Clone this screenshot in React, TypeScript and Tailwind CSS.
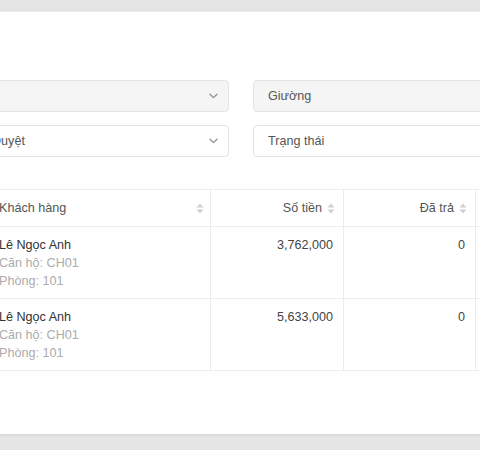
function Chevron() {
  return (
    <svg width="9" height="6" viewBox="0 0 9 6" fill="none" className="shrink-0">
      <path d="M1 1.2 L4.5 4.6 L8 1.2" stroke="#8a8a8a" strokeWidth="1.2" strokeLinecap="round" strokeLinejoin="round" />
    </svg>
  );
}

function SortIcon() {
  return (
    <svg width="8" height="11" viewBox="0 0 8 11" className="shrink-0">
      <path d="M4 0.5 L7.5 4.5 H0.5 Z" fill="#cfcfd4" />
      <path d="M4 10.5 L7.5 6.5 H0.5 Z" fill="#cfcfd4" />
    </svg>
  );
}

function Select({ label, disabled, arrow }: { label: string; disabled?: boolean; arrow?: boolean }) {
  return (
    <div
      className={`flex h-[32px] items-center justify-between rounded-[4px] border border-[#e2e2e8] pl-[14px] pr-[10px] text-[#555] ${
        disabled ? "bg-[#f5f5f5]" : "bg-white"
      }`}
    >
      <span>{label}</span>
      {arrow && <Chevron />}
    </div>
  );
}

const rows = [
  { name: "Lê Ngọc Anh", apt: "Căn hộ: CH01", room: "Phòng: 101", amount: "3,762,000", paid: "0" },
  { name: "Lê Ngọc Anh", apt: "Căn hộ: CH01", room: "Phòng: 101", amount: "5,633,000", paid: "0" },
];

export default function App() {
  return (
    <div className="h-[450px] overflow-hidden bg-[#e4e5e4] pt-[11px] font-['Liberation_Sans',Arial,sans-serif] text-[12.6px]">
      <div className="h-[423px] overflow-hidden border-t border-[#efefef] bg-white shadow-[0_1px_3px_rgba(0,0,0,0.08)]">
        {/* Filters */}
        <div className="-ml-[23px] grid w-[528px] grid-cols-[252px_252px] gap-x-[24px] gap-y-[13px] pt-[68px]">
          <Select label="" disabled arrow />
          <Select label="Giường" disabled />
          <Select label="Duyệt" arrow />
          <Select label="Trạng thái" />
        </div>

        {/* Table */}
        <div className="-ml-[12px] mt-[32px] w-[620px] text-[#444]">
          <div className="grid h-[38px] grid-cols-[223px_133px_132px_132px] border-y border-[#ebebf0] text-[#555]">
            <div className="flex items-center justify-between border-r border-[#ebebf0] pl-[11px] pr-[6px]">
              <span>Khách hàng</span>
              <SortIcon />
            </div>
            <div className="flex items-center justify-end gap-[5px] border-r border-[#ebebf0] pr-[8px]">
              <span>Số tiền</span>
              <SortIcon />
            </div>
            <div className="flex items-center justify-end gap-[5px] border-r border-[#ebebf0] pr-[8px]">
              <span>Đã trả</span>
              <SortIcon />
            </div>
            <div className="border-r border-[#ebebf0]" />
          </div>
          {rows.map((r, i) => (
            <div key={i} className="grid h-[72px] grid-cols-[223px_133px_132px_132px] border-b border-[#ebebf0] leading-[18px]">
              <div className="flex flex-col border-r border-[#ebebf0] pl-[11px] pt-[9px]">
                <span className="text-[#333]">{r.name}</span>
                <span className="text-[#ababab]">{r.apt}</span>
                <span className="text-[#ababab]">{r.room}</span>
              </div>
              <div className="border-r border-[#ebebf0] pr-[10px] pt-[9px] text-right">{r.amount}</div>
              <div className="border-r border-[#ebebf0] pr-[10px] pt-[9px] text-right">{r.paid}</div>
              <div className="border-r border-[#ebebf0]" />
            </div>
          ))}
        </div>
      </div>
    </div>
  );
}
